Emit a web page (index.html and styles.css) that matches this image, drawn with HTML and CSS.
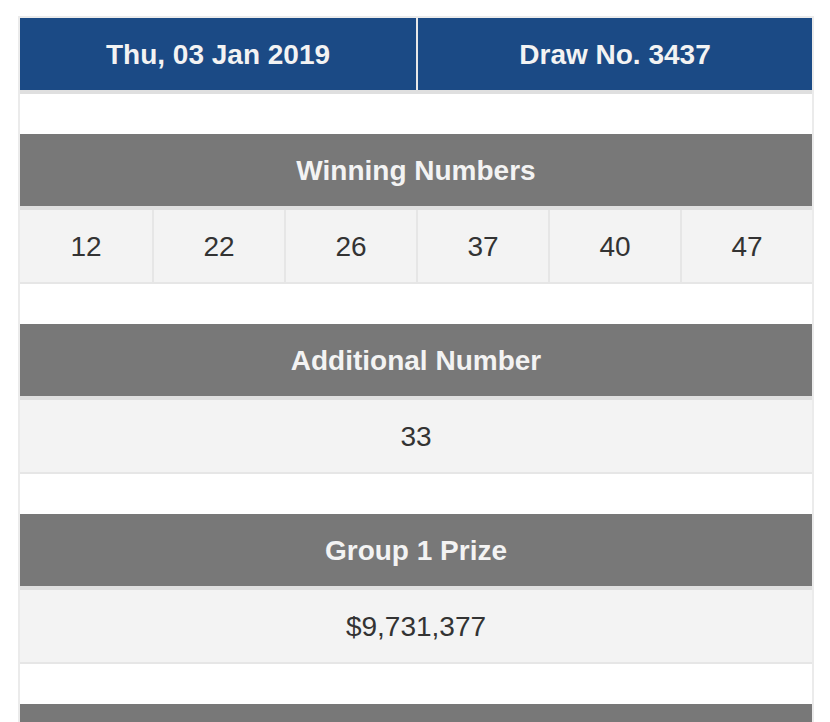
FILE: index.html
```html
<!DOCTYPE html>
<html lang="en">
<head>
<meta charset="utf-8">
<title>Draw Results</title>
<link rel="stylesheet" href="styles.css">
</head>
<body>
<div class="results">
  <div class="draw-head">
    <div class="draw-cell">Thu, 03 Jan 2019</div>
    <div class="draw-cell">Draw No. 3437</div>
  </div>

  <div class="block">
    <div class="block-title">Winning Numbers</div>
    <div class="nums">
      <div class="num">12</div>
      <div class="num">22</div>
      <div class="num">26</div>
      <div class="num">37</div>
      <div class="num">40</div>
      <div class="num">47</div>
    </div>
  </div>

  <div class="block">
    <div class="block-title">Additional Number</div>
    <div class="single">33</div>
  </div>

  <div class="block">
    <div class="block-title">Group 1 Prize</div>
    <div class="single">$9,731,377</div>
  </div>

  <div class="block">
    <div class="block-title"></div>
  </div>
</div>
</body>
</html>
```

FILE: styles.css
```css
html, body {
  margin: 0;
  padding: 0;
  background: #ffffff;
}

body {
  font-family: "Liberation Sans", Arial, Helvetica, sans-serif;
  color: #333333;
}

.results {
  margin: 16px 0 0 18px;
  width: 792px;
  border: 2px solid #ebebeb;
  border-bottom: none;
}

.draw-head {
  display: flex;
  background: #1b4a85;
  border-bottom: 4px solid #dfdfdf;
  margin-bottom: 40px;
}

.draw-cell {
  box-sizing: border-box;
  height: 72px;
  padding-top: 2px;
  display: flex;
  align-items: center;
  justify-content: center;
  color: #f3f3f3;
  font-weight: bold;
  font-size: 28px;
}

.draw-cell:first-child {
  width: 398px;
  border-right: 2px solid #e8e8e8;
}

.draw-cell:last-child {
  flex: 1;
}

.block {
  margin-bottom: 40px;
}

.block-title {
  box-sizing: border-box;
  height: 76px;
  padding-top: 2px;
  display: flex;
  align-items: center;
  justify-content: center;
  background: #787878;
  color: #f3f3f3;
  font-weight: bold;
  font-size: 28px;
  border-bottom: 4px solid #dfdfdf;
}

.nums {
  display: grid;
  grid-template-columns: repeat(6, 1fr);
  background: #f3f3f3;
  border-bottom: 2px solid #e6e6e6;
}

.num {
  box-sizing: border-box;
  height: 72px;
  padding-top: 2px;
  display: flex;
  align-items: center;
  justify-content: center;
  font-size: 28px;
  border-left: 2px solid #e6e6e6;
}

.num:first-child {
  border-left: none;
}

.single {
  box-sizing: border-box;
  height: 74px;
  padding-top: 2px;
  display: flex;
  align-items: center;
  justify-content: center;
  font-size: 28px;
  background: #f3f3f3;
  border-bottom: 2px solid #e6e6e6;
}
```
